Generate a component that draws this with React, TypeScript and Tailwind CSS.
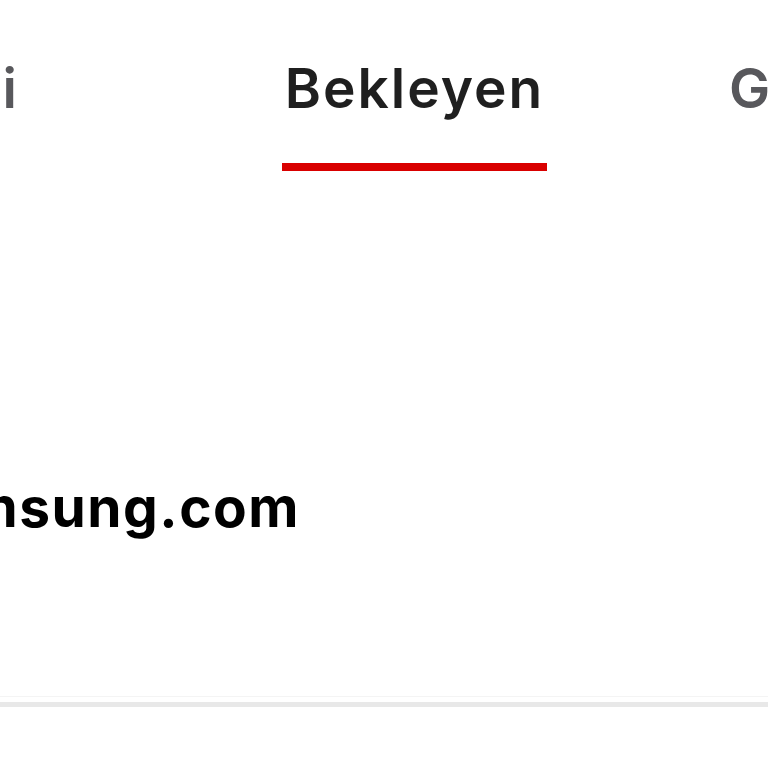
const App = () => {
  return (
    <div className="w-[768px] h-[768px] bg-white overflow-hidden" style={{ fontFamily: "Inter, 'Liberation Sans', sans-serif" }}>
      <nav className="flex items-start pt-[56px] h-[171px]">
        <div className="shrink-0 w-[19px] overflow-hidden flex justify-end">
          <span className="shrink-0 whitespace-nowrap text-[55px] leading-[64px] tracking-[2px] font-semibold text-[#58585c]">Teslim Edildi</span>
        </div>
        <div className="shrink-0 ml-[263px] w-[265px] flex flex-col items-center">
          <span className="whitespace-nowrap text-[55px] leading-[64px] tracking-[2px] font-semibold text-[#1f1f1f]">Bekleyen</span>
          <div className="mt-[43px] h-[8px] w-full bg-[#d90000]" />
        </div>
        <div className="shrink-0 ml-[182px] whitespace-nowrap text-[55px] leading-[64px] tracking-[2px] font-semibold text-[#58585c]">Gönderilen</div>
      </nav>
      <div className="mt-[304px] w-[300px] overflow-hidden flex justify-end">
        <span className="shrink-0 whitespace-nowrap text-[55px] leading-[64px] tracking-[1.5px] font-bold text-black">kullanici@samsung.com</span>
      </div>
      <div className="mt-[157px] h-px bg-[#f4f4f4]" />
      <div className="mt-[5px] h-[5px] bg-[#e8e8e8]" />
    </div>
  );
};

export default App;
